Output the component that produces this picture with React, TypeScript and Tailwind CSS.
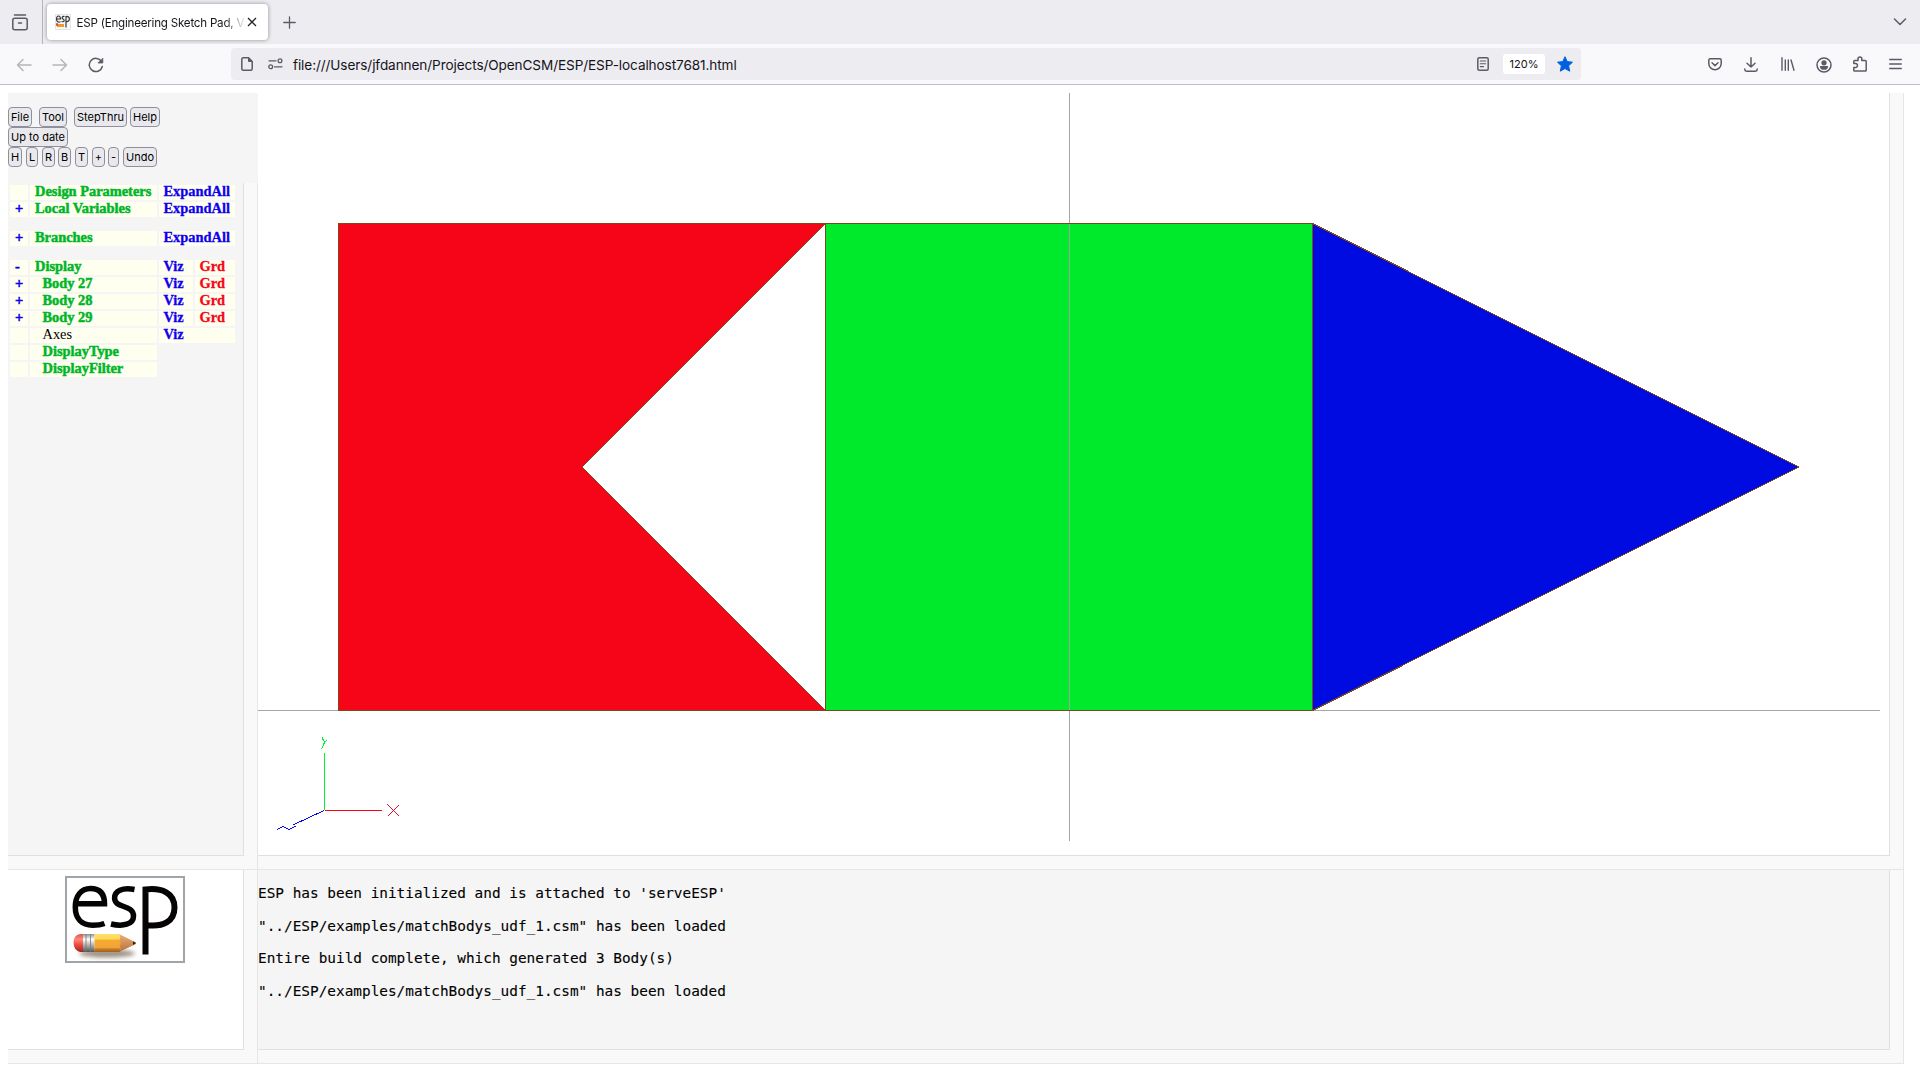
import React from "react";

const cell = "h-[15px] bg-[#ffffef] leading-[13px] whitespace-nowrap";

type Row = { sign?: string; label: string; level?: number; plain?: boolean; actions: string[]; gap?: boolean };

const rows: Row[] = [
  { label: "Design Parameters", actions: ["ExpandAll"] },
  { sign: "+", label: "Local Variables", actions: ["ExpandAll"] },
  { sign: "+", label: "Branches", actions: ["ExpandAll"], gap: true },
  { sign: "-", label: "Display", actions: ["Viz", "Grd"], gap: true },
  { sign: "+", label: "Body 27", level: 1, actions: ["Viz", "Grd"] },
  { sign: "+", label: "Body 28", level: 1, actions: ["Viz", "Grd"] },
  { sign: "+", label: "Body 29", level: 1, actions: ["Viz", "Grd"] },
  { label: "Axes", level: 1, plain: true, actions: ["Viz"] },
  { label: "DisplayType", level: 1, actions: [] },
  { label: "DisplayFilter", level: 1, actions: [] },
];

function Tree() {
  return (
    <div className="flex flex-col gap-[2px] pt-[2px] pl-[2px] font-['Liberation_Serif',serif] text-[14.4px] font-bold">
      {rows.map((r) => (
        <div key={r.label} className={`flex gap-[2px] ${r.gap ? "mt-[12px]" : ""}`}>
          <div className={`${cell} w-[18px] pl-[5px] text-[#0f00f0] [-webkit-text-stroke:0.5px_#0f00f0]`}>{r.sign}</div>
          <div
            className={`${cell} w-[127px] ${r.level ? "pl-[12.5px]" : "pl-[5px]"} ${r.plain ? "font-normal text-black" : "text-[#00b52a] [-webkit-text-stroke:0.5px_#00b52a]"}`}
          >
            {r.label}
          </div>
          {r.actions.length === 1 && <div className={`${cell} w-[76px] pl-[4.5px] text-[#0f00f0] [-webkit-text-stroke:0.3px_#0f00f0]`}>{r.actions[0]}</div>}
          {r.actions.length === 2 && (
            <>
              <div className={`${cell} w-[34px] pl-[4.5px] text-[#0f00f0] [-webkit-text-stroke:0.3px_#0f00f0]`}>{r.actions[0]}</div>
              <div className={`${cell} w-[40px] pl-[4.5px] text-[#f50519] [-webkit-text-stroke:0.3px_#f50519]`}>{r.actions[1]}</div>
            </>
          )}
        </div>
      ))}
    </div>
  );
}

function Btn({ className, children }: { className: string; children: React.ReactNode }) {
  return (
    <button
      className={`flex h-[20px] shrink-0 items-center justify-center rounded-[4px] border border-[#8f8f9d] bg-[#e9e9ed] text-[11px] whitespace-nowrap text-black ${className}`}
    >
      {children}
    </button>
  );
}

function Toolbar() {
  return (
    <div className="h-[90px] bg-[#f5f5f5] pt-[14px] font-[Inter,sans-serif]">
      <div className="flex">
        <Btn className="w-[24px]">File</Btn>
        <Btn className="ml-[7px] w-[28px]">Tool</Btn>
        <Btn className="ml-[7px] w-[53px]">StepThru</Btn>
        <Btn className="ml-[3px] w-[30px]">Help</Btn>
      </div>
      <div className="flex">
        <Btn className="w-[60px]">Up to date</Btn>
      </div>
      <div className="flex">
        <Btn className="w-[14px]">H</Btn>
        <Btn className="ml-[4px] w-[12px]">L</Btn>
        <Btn className="ml-[4px] w-[13px]">R</Btn>
        <Btn className="ml-[3px] w-[13px]">B</Btn>
        <Btn className="ml-[4px] w-[13px]">T</Btn>
        <Btn className="ml-[4px] w-[13px]">+</Btn>
        <Btn className="ml-[3px] w-[11px]">-</Btn>
        <Btn className="ml-[4px] w-[34px]">Undo</Btn>
      </div>
    </div>
  );
}

function Pane({ className, bg, children }: { className: string; bg: string; children: React.ReactNode }) {
  return (
    <div className={`border-r border-b border-[#e6e6e6] bg-[#f9f9f9] pr-[13px] pb-[13px] ${className}`}>
      <div className={`h-full w-full overflow-hidden border-r border-b border-[#e0e0e0] ${bg}`}>{children}</div>
    </div>
  );
}

function Scene() {
  return (
    <svg className="block" width="1631" height="762" viewBox="258 93 1631 762" shapeRendering="crispEdges" fill="none">
      <path d="M258 710.5H1880M1069.5 93V841" stroke="#a6a6a6" />
      <path d="M338.5 223.5H825.5L582 467L825.5 710.5H338.5Z" fill="#f60519" stroke="#7b4a1c" />
      <path d="M825.5 223.5H1312.5V710.5H825.5Z" fill="#00ea2c" stroke="#7b4a1c" />
      <path d="M1312.5 223.5L1799 467L1312.5 710.5Z" fill="#000be2" stroke="#7b4a1c" />
      <path d="M1069.5 224V710" stroke="#a0a89a" />
      <path d="M324 753H325V810H324Z" fill="#00f433" />
      <path d="M325 810H382V811H325Z" fill="#fb0018" />
      <path d="M387 804L399 816M399 805L388 816" stroke="#e0102c" strokeWidth="1.2" />
      <path d="M322.5 737V739L324.5 741.5M327 740L324.5 742L323.5 745L321.5 749" stroke="#00f433" />
      <path d="M324 810.5L293 825M277 829.5L283 826.5L289 829.5L296 826" stroke="#0008f5" />
    </svg>
  );
}

function Pencil() {
  return (
    <svg className="absolute top-[55px] left-[5px]" width="70" height="30" viewBox="0 0 70 30">
      <defs>
        <linearGradient id="wood" x1="0" y1="0" x2="0" y2="1">
          <stop offset="0" stopColor="#ffe06a" />
          <stop offset="0.28" stopColor="#ffd95c" />
          <stop offset="0.34" stopColor="#f6ab2e" />
          <stop offset="0.75" stopColor="#f2a336" />
          <stop offset="0.82" stopColor="#c9822c" />
          <stop offset="1" stopColor="#9d5f1c" />
        </linearGradient>
        <linearGradient id="rubber" x1="0" y1="0" x2="0" y2="1">
          <stop offset="0" stopColor="#d9574c" />
          <stop offset="0.3" stopColor="#ff8a78" />
          <stop offset="0.6" stopColor="#ee4a40" />
          <stop offset="1" stopColor="#a32620" />
        </linearGradient>
        <linearGradient id="metal" x1="0" y1="0" x2="0" y2="1">
          <stop offset="0" stopColor="#8f8f8f" />
          <stop offset="0.3" stopColor="#ffffff" />
          <stop offset="0.6" stopColor="#b5b5b5" />
          <stop offset="1" stopColor="#555555" />
        </linearGradient>
        <linearGradient id="tip" x1="0" y1="0" x2="0" y2="1">
          <stop offset="0" stopColor="#e9b07a" />
          <stop offset="1" stopColor="#b86f3a" />
        </linearGradient>
        <filter id="soft" x="-20%" y="-80%" width="140%" height="260%">
          <feGaussianBlur stdDeviation="2" />
        </filter>
      </defs>
      <ellipse cx="35" cy="20.5" rx="28" ry="4" fill="#5b4630" opacity="0.6" filter="url(#soft)" />
      <path d="M11 1H8Q1.500 2 1.500 9.500T8 19H11Z" fill="url(#rubber)" />
      <path d="M11 1H22.500V19H11Z" fill="url(#metal)" />
      <path d="M14 1V19M18.500 1V19" stroke="#777" strokeWidth="0.8" />
      <path d="M22.500 1H47L51 7L48 19H22.500Z" fill="url(#wood)" />
      <path d="M47 1L64 9.500V11L47 19Q50 16 47.500 13Q50 10 47.500 6.500Q49 4 47 1Z" fill="url(#tip)" />
      <path d="M61 8.300L64 10L61 12Z" fill="#28251f" />
    </svg>
  );
}

function Logo() {
  return (
    <div className="relative mt-[6px] ml-[57px] h-[87px] w-[120px] border-2 border-[#a0a5a9] bg-white">
      <svg className="absolute inset-0" width="116" height="83" viewBox="0 0 116 83" fill="none" stroke="#050303" strokeWidth="6">
        <path d="M7 25.800H37.500C37.500 15 32 10.500 23.500 10.500C14 10.500 8.300 18 8.300 29C8.300 41 15 47.200 25.500 47.200C30 47.200 34 46.800 37.500 45.500" strokeWidth="5.500" />
        <path d="M67.500 11.500C55 9.200 47.600 13 47.600 20C47.600 31 66.500 26 66.500 38C66.500 46.500 56 48.800 44 46" strokeWidth="5.500" />
        <path d="M78.500 76.500V11.500C95 9.500 107.500 15 107.500 29.500C107.500 43.500 96 49.500 79 47" />
      </svg>
      <Pencil />
    </div>
  );
}

const ic = { fill: "none", stroke: "#5b5b66", strokeWidth: 1.5, strokeLinecap: "round", strokeLinejoin: "round" } as const;

function TabBar() {
  return (
    <div className="flex h-[44px] bg-[#edecf1]">
      <div className="flex w-[43px] border-r border-[#b4b4bb] pt-[14px] pl-[12px]">
        <svg width="16" height="17" viewBox="0 0 16 17" {...ic}>
          <path d="M2.500 1H13.500" />
          <rect x="0.800" y="4.200" width="14.400" height="11.500" rx="2" />
          <path d="M6.500 9H9.500" />
        </svg>
      </div>
      <div className="mt-[4px] ml-[4px] flex h-[36px] w-[221px] items-center rounded-[4px] bg-white pl-[8px] shadow-[0_0_4px_rgba(0,0,0,0.4)]">
        <svg width="16" height="16" viewBox="0 0 16 16" fill="none" stroke="#333" strokeWidth="1.2">
          <path d="M0.500 0.500H15.500V15.500H0.500Z" stroke="#e4e4e4" strokeWidth="1" fill="#f7f7f7" />
          <path d="M1.500 5H5.500C5.500 1 1.500 1 1.500 5C1.500 8 3.500 8.500 5.500 7.800M9.500 2.500C7 2 6.500 4 8 5C10 6 9.500 8.500 6.500 7.500M11 13.500V2.500C15.500 1.500 15.500 8.500 11 7.500" />
          <path d="M2 11.500H9" stroke="#ef9a2c" strokeWidth="3" />
          <path d="M1 10.500H3" stroke="#e0433a" strokeWidth="2.500" />
        </svg>
        <div className="mt-[3px] ml-[5.5px] w-[167.5px] bg-linear-to-r from-[#15141a] from-88% to-[#15141a]/10 to-100% bg-clip-text font-[Inter,sans-serif] text-[11.6px] tracking-[-0.22px] whitespace-nowrap text-transparent">
          ESP (Engineering Sketch Pad, V
        </div>
        <svg className="ml-[3px]" width="10" height="10" viewBox="0 0 10 10" stroke="#222" strokeWidth="1.300">
          <path d="M1 1L9 9M9 1L1 9" />
        </svg>
      </div>
      <svg className="mt-[16px] ml-[15px]" width="13" height="13" viewBox="0 0 13 13" {...ic} strokeWidth="1.300">
        <path d="M6.500 0.800V12.200M0.800 6.500H12.200" />
      </svg>
      <svg className="mt-[18px] mr-[13px] ml-auto" width="14" height="8" viewBox="0 0 14 8" {...ic}>
        <path d="M1.500 1L7 6.500L12.500 1" />
      </svg>
    </div>
  );
}

function NavBar() {
  return (
    <div className="flex h-[41px] border-b border-[#bfbfc5] bg-[#f9f9fb] pt-[4px] pl-[16px] font-[Inter,sans-serif]">
      <div className="flex h-[32px] items-center gap-[20px]">
        <svg className="mt-[1px]" width="16" height="14" viewBox="0 0 16 14" {...ic} stroke="#b4b4ba">
          <path d="M15 7H1.500M7 1.500L1.500 7L7 12.500" />
        </svg>
        <svg className="mt-[1px]" width="16" height="14" viewBox="0 0 16 14" {...ic} stroke="#b4b4ba">
          <path d="M1 7H14.500M9 1.500L14.500 7L9 12.500" />
        </svg>
        <svg className="mt-[2px]" width="16" height="16" viewBox="0 0 16 16" {...ic}>
          <path d="M13.500 4.500A6.600 6.600 0 1 0 14.300 9.500" />
          <path d="M14.800 1.500V6H10.300Z" fill="#5b5b66" strokeWidth="0.800" />
        </svg>
      </div>
      <div className="ml-[127px] flex h-[32px] w-[1350px] items-center rounded-[4px] bg-[#edecf1]">
        <svg className="ml-[10px]" width="12" height="14" viewBox="0 0 12 14" {...ic}>
          <path d="M2.300 0.800H7.500L11.200 4.500V11.700Q11.200 13.200 9.700 13.200H2.300Q0.800 13.200 0.800 11.700V2.300Q0.800 0.800 2.300 0.800Z" />
          <path d="M7.500 0.800V4.500H11.200Z" fill="#5b5b66" strokeWidth="1" />
        </svg>
        <svg className="ml-[14.5px]" width="15" height="12" viewBox="0 0 15 12" {...ic} strokeWidth="1.300">
          <path d="M1 2.800H8M6.500 8.800H14" />
          <circle cx="12" cy="2.800" r="1.900" />
          <circle cx="2.700" cy="8.800" r="1.900" />
        </svg>
        <div className="mt-[3px] ml-[10.5px] w-[1175px] text-[13.6px] tracking-[-0.1px] whitespace-nowrap text-[#15141a]">
          file:///Users/jfdannen/Projects/OpenCSM/ESP/ESP-localhost7681.html
        </div>
        <svg className="ml-[9px]" width="12" height="14" viewBox="0 0 12 14" {...ic}>
          <rect x="0.800" y="0.800" width="10.400" height="12.400" rx="1.500" />
          <path d="M3.300 4H8.700M3.300 6.800H8.700M3.300 9.600H6.500" strokeWidth="1.100" />
        </svg>
        <div className="ml-[14px] flex h-[20px] w-[42px] items-center justify-center rounded-[3px] bg-white text-[11px] text-[#15141a]">120%</div>
        <svg className="ml-[12px]" width="16" height="16" viewBox="0 0 16 16" fill="#0060df" stroke="#0060df" strokeWidth="1" strokeLinejoin="round">
          <path d="M8 0.700L10.200 5.600L15.500 6.200L11.600 9.800L12.700 15.200L8 12.500L3.300 15.200L4.400 9.800L0.500 6.200L5.800 5.600Z" />
        </svg>
      </div>
      <div className="mr-[18px] ml-auto flex h-[32px] items-center">
        <svg width="14" height="13" viewBox="0 0 14 13" {...ic}>
          <path d="M2.200 0.800H11.800Q13.200 0.800 13.200 2.200V5.500A6.200 6.200 0 0 1 0.800 5.500V2.200Q0.800 0.800 2.200 0.800Z" />
          <path d="M4 4.800L7 7.600L10 4.800" />
        </svg>
        <svg className="ml-[22px]" width="14" height="15" viewBox="0 0 14 15" {...ic}>
          <path d="M7 0.800V10M3 6.300L7 10L11 6.300M0.800 12V12.500Q0.800 14.200 2.500 14.200H11.500Q13.200 14.200 13.200 12.500V12" />
        </svg>
        <svg className="ml-[23px]" width="14" height="14" viewBox="0 0 14 14" {...ic} strokeWidth="1.400">
          <path d="M1 0.800V13.200M4.300 3V13.200M7.300 3V13.200M10 3L13 13.200" />
        </svg>
        <svg className="mt-[1px] ml-[21px]" width="16" height="16" viewBox="0 0 16 16" {...ic}>
          <circle cx="8" cy="8" r="7" />
          <circle cx="8" cy="5.800" r="1.900" fill="#5b5b66" />
          <path d="M4.600 9.700H11.400Q10.800 12 8 12T4.600 9.700Z" fill="#5b5b66" />
        </svg>
        <svg className="ml-[21px]" width="14" height="16" viewBox="0 0 14 16" {...ic}>
          <path d="M0.800 7.600V5.300Q0.800 4.500 1.600 4.500H5V2.800A1.900 1.900 0 0 1 8.800 2.800V4.500H12.400Q13.200 4.500 13.200 5.300V14.200Q13.200 15 12.400 15H1.600Q0.800 15 0.800 14.200V11.500H2.500A1.900 1.900 0 0 0 2.500 7.600Z" />
        </svg>
        <svg className="ml-[22px]" width="13" height="12" viewBox="0 0 13 12" {...ic} strokeWidth="1.300">
          <path d="M0.700 1.500H12.300M0.700 6H12.300M0.700 10.500H12.300" />
        </svg>
      </div>
    </div>
  );
}

const messages = [
  "ESP has been initialized and is attached to 'serveESP'",
  "\"../ESP/examples/matchBodys_udf_1.csm\" has been loaded",
  "Entire build complete, which generated 3 Body(s)",
  "\"../ESP/examples/matchBodys_udf_1.csm\" has been loaded",
];

export default function App() {
  return (
    <div className="h-[1080px] w-[1920px] overflow-hidden bg-white">
      <TabBar />
      <NavBar />
      <div className="flex pt-[8px] pl-[8px]">
        <div className="w-[250px]">
          <Toolbar />
          <Pane className="h-[687px]" bg="bg-[#f5f5f5]">
            <Tree />
          </Pane>
          <Pane className="h-[194px]" bg="bg-white">
            <Logo />
          </Pane>
        </div>
        <div className="w-[1646px]">
          <Pane className="h-[777px]" bg="bg-white">
            <Scene />
          </Pane>
          <Pane className="h-[194px]" bg="bg-[#f5f5f5]">
            <div className="flex flex-col gap-[14.600px] pt-[14px] text-[14.400px] leading-[18px] text-black [-webkit-text-stroke:0.1px_black]">
              {messages.map((m, i) => (
                <pre key={i} className="font-['DejaVu_Sans_Mono',monospace]">{m}</pre>
              ))}
            </div>
          </Pane>
        </div>
      </div>
    </div>
  );
}
